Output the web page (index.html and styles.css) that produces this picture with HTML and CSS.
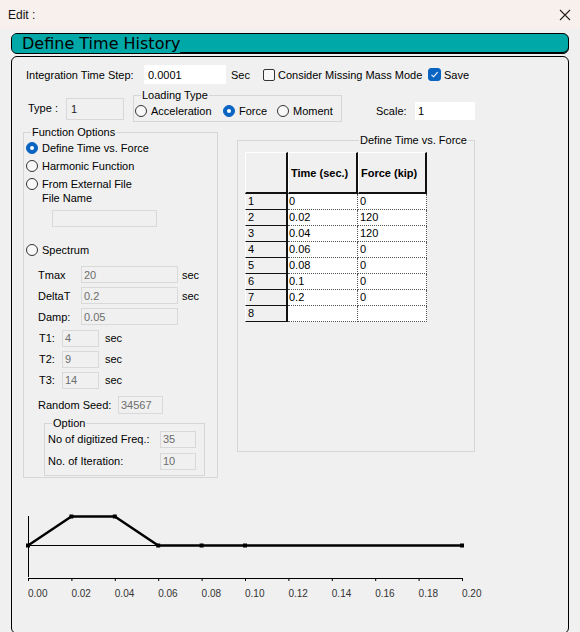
FILE: index.html
```html
<!DOCTYPE html>
<html>
<head>
<meta charset="utf-8">
<link rel="stylesheet" href="styles.css">
</head>
<body>
<div class="titlebar">
  <span class="title">Edit :</span>
  <svg class="close" width="12" height="12" viewBox="0 0 12 12"><path d="M1 1 L11 11 M11 1 L1 11" stroke="#222" stroke-width="1.1" fill="none"/></svg>
</div>
<div class="content">
  <div class="header"><span class="htext">Define Time History</span></div>
  <div class="panel">
    <div class="row1">
      <span class="lbl-step">Integration Time Step:</span>
      <span class="tb w-step">0.0001</span>
      <span class="sec1">Sec</span>
      <span class="check missing"><i class="box"></i><span>Consider Missing Mass Mode</span></span>
      <span class="check save"><i class="box on"><svg width="9" height="9" viewBox="0 0 9 9"><path d="M1.5 4.8 L3.6 6.8 L7.6 2.2" stroke="#fff" stroke-width="1.1" fill="none"/></svg></i><span>Save</span></span>
    </div>
    <div class="row2">
      <div class="type"><span class="lbl-type">Type :</span><span class="tb dis w-type">1</span></div>
      <fieldset class="loading">
        <legend>Loading Type</legend>
        <div class="lt-radios">
          <span class="rb r-acc"><i></i>Acceleration</span>
          <span class="rb r-force"><i class="on"></i>Force</span>
          <span class="rb r-mom"><i></i>Moment</span>
        </div>
      </fieldset>
      <div class="scale"><span class="lbl-scale">Scale:</span><span class="tb w-scale">1</span></div>
    </div>
    <div class="main">
      <fieldset class="fo">
        <legend>Function Options</legend>
        <div class="fo-radios">
          <span class="rb"><i class="on"></i>Define Time vs. Force</span>
          <span class="rb"><i></i>Harmonic Function</span>
          <span class="rb"><i></i>From External File</span>
        </div>
        <div class="filename">File Name</div>
        <span class="tb dis w-file"></span>
        <span class="rb spectrum"><i></i>Spectrum</span>
        <div class="params">
          <div class="prow"><span class="pl">Tmax</span><span class="tb dis w-long">20</span><span class="ps">sec</span></div>
          <div class="prow"><span class="pl">DeltaT</span><span class="tb dis w-long">0.2</span><span class="ps">sec</span></div>
          <div class="prow"><span class="pl">Damp:</span><span class="tb dis w-long">0.05</span></div>
          <div class="prow trow"><span class="pl">T1:</span><span class="tb dis w-t">4</span><span class="ps">sec</span></div>
          <div class="prow trow"><span class="pl">T2:</span><span class="tb dis w-t">9</span><span class="ps">sec</span></div>
          <div class="prow trow"><span class="pl">T3:</span><span class="tb dis w-t">14</span><span class="ps">sec</span></div>
        </div>
        <div class="seed"><span class="pl">Random Seed:</span><span class="tb dis w-seed">34567</span></div>
        <fieldset class="option">
          <legend>Option</legend>
          <div class="orow"><span class="ol">No of digitized Freq.:</span><span class="tb dis w-opt">35</span></div>
          <div class="orow"><span class="ol">No. of Iteration:</span><span class="tb dis w-opt">10</span></div>
        </fieldset>
      </fieldset>
      <fieldset class="tg">
        <legend>Define Time vs. Force</legend>
        <table class="grid">
          <colgroup><col class="c1"><col class="c2"><col class="c3"></colgroup>
          <tr class="hdr"><th></th><th>Time (sec.)</th><th>Force (kip)</th></tr>
          <tr><td class="rh">1</td><td>0</td><td>0</td></tr>
          <tr><td class="rh">2</td><td>0.02</td><td>120</td></tr>
          <tr><td class="rh">3</td><td>0.04</td><td>120</td></tr>
          <tr><td class="rh">4</td><td>0.06</td><td>0</td></tr>
          <tr><td class="rh">5</td><td>0.08</td><td>0</td></tr>
          <tr><td class="rh">6</td><td>0.1</td><td>0</td></tr>
          <tr><td class="rh">7</td><td>0.2</td><td>0</td></tr>
          <tr><td class="rh">8</td><td></td><td></td></tr>
        </table>
      </fieldset>
    </div>
    <svg class="chart" width="556" height="112" viewBox="12 498 556 112">
      <line x1="28.5" y1="515" x2="28.5" y2="576" stroke="#000" stroke-width="1"/>
      <line x1="28" y1="544.5" x2="462" y2="544.5" stroke="#000" stroke-width="1"/>
      <polyline points="28,544.5 71.4,515.5 114.8,515.5 158.2,544.5 201.6,544.5 245,544.5 462,544.5" fill="none" stroke="#000" stroke-width="2.4"/>
      <g fill="#000">
        <rect x="26" y="542.5" width="4" height="4"/>
        <rect x="69.4" y="513.5" width="4" height="4"/>
        <rect x="112.8" y="513.5" width="4" height="4"/>
        <rect x="156.2" y="542.5" width="4" height="4"/>
        <rect x="199.6" y="542.5" width="4" height="4"/>
        <rect x="243" y="542.5" width="4" height="4"/>
        <rect x="460" y="542.5" width="4" height="4"/>
      </g>
      <line x1="28" y1="577.5" x2="462.5" y2="577.5" stroke="#000" stroke-width="1"/>
      <g stroke="#000" stroke-width="1">
        <line x1="28.5" y1="577" x2="28.5" y2="580"/>
        <line x1="71.9" y1="577" x2="71.9" y2="580"/>
        <line x1="115.3" y1="577" x2="115.3" y2="580"/>
        <line x1="158.7" y1="577" x2="158.7" y2="580"/>
        <line x1="202.1" y1="577" x2="202.1" y2="580"/>
        <line x1="245.5" y1="577" x2="245.5" y2="580"/>
        <line x1="288.9" y1="577" x2="288.9" y2="580"/>
        <line x1="332.3" y1="577" x2="332.3" y2="580"/>
        <line x1="375.7" y1="577" x2="375.7" y2="580"/>
        <line x1="419.1" y1="577" x2="419.1" y2="580"/>
        <line x1="462.5" y1="577" x2="462.5" y2="580"/>
      </g>
      <g class="ticklbl" font-size="10" fill="#333">
        <text x="28" y="596">0.00</text>
        <text x="71.4" y="596">0.02</text>
        <text x="114.8" y="596">0.04</text>
        <text x="158.2" y="596">0.06</text>
        <text x="201.6" y="596">0.08</text>
        <text x="245" y="596">0.10</text>
        <text x="288.4" y="596">0.12</text>
        <text x="331.8" y="596">0.14</text>
        <text x="375.2" y="596">0.16</text>
        <text x="418.6" y="596">0.18</text>
        <text x="462" y="596">0.20</text>
      </g>
    </svg>
  </div>
</div>
</body>
</html>
```

FILE: styles.css
```css
* { box-sizing: border-box; }
html, body { margin: 0; padding: 0; }
body {
  width: 580px;
  height: 632px;
  overflow: hidden;
  background: #f0f0f0;
  font-family: "Liberation Sans", Arial, sans-serif;
  font-size: 11px;
  color: #000;
}
.titlebar {
  height: 29px;
  background: #f8f0ed;
  display: flex;
  align-items: center;
  justify-content: space-between;
  padding: 0 9px 0 8px;
}
.title { font-size: 12px; color: #111; }
.close { display: block; }

.content { padding: 4px 11px 0 11px; }
.header {
  height: 21px;
  border: 1px solid #000;
  border-radius: 6px;
  background: #00a8a8;
  box-shadow: inset 0 -1px 0 #000;
  font-family: "DejaVu Sans", "Liberation Sans", sans-serif;
  font-size: 16px;
  line-height: 19px;
  padding: 0;
  color: #000;
}
.htext {
  display: inline-block;
  height: 19px;
  line-height: 20px;
  padding-left: 10px;
  background: #00a8a8;
  border-bottom-left-radius: 5px;
  border-top-left-radius: 5px;
  vertical-align: top;
}
.panel {
  margin-top: 2px;
  height: 578px;
  border: 1px solid #000;
  border-radius: 6px;
  padding-top: 8px;
}

.tb {
  display: flex;
  align-items: center;
  background: #fff;
  padding-left: 3px;
  height: 17px;
  flex: none;
}
.tb.dis {
  background: #f0f0f0;
  border: 1px solid #d9d9d9;
  color: #6d6d6d;
  padding-left: 2px;
}

/* row 1 */
.row1 { display: flex; align-items: center; height: 19px; padding-left: 14px; }
.lbl-step { width: 118px; flex: none; }
.w-step { width: 82px; height: 19px; padding-left: 4px; }
.sec1 { margin-left: 5px; width: 32px; flex: none; }
.check { display: flex; align-items: center; flex: none; }
.check .box {
  width: 12px; height: 12px;
  border: 1px solid #333;
  border-radius: 2px;
  background: #f8f8f8;
  margin-right: 3px;
  display: flex; align-items: center; justify-content: center;
}
.check .box.on { width: 13px; height: 13px; background: #0a64c2; border-color: #0a64c2; border-radius: 3px; }
.check .box svg { display: block; }
.missing { width: 165px; }

/* radios */
.rb { display: flex; align-items: center; height: 18px; flex: none; }
.rb i {
  width: 12px; height: 12px;
  border: 1px solid #333;
  border-radius: 50%;
  background: #f8f8f8;
  margin-right: 4px;
  flex: none;
  display: flex; align-items: center; justify-content: center;
}
.rb i.on { background: #0a64c2; border-color: #0a64c2; }
.rb i.on::after { content: ""; width: 4px; height: 4px; border-radius: 50%; background: #fff; }

/* fieldsets */
fieldset {
  margin: 0;
  padding: 0;
  min-width: 0;
  border: 1px solid #d6d6d6;
}
legend {
  padding: 0 1px;
  margin-left: 7px;
  line-height: 13px;
  font-size: 11px;
}

/* row 2 */
.row2 { display: flex; align-items: flex-start; margin-top: 5px; }
.type { display: flex; align-items: center; margin-top: 9px; padding-left: 16px; }
.lbl-type { width: 38px; flex: none; margin-top: -2px; }
.tb.w-type { width: 58px; height: 22px; color: #222; padding-left: 4px; }
.loading { margin-left: 9px; width: 209px; padding: 0 0 1px 0; }
.lt-radios { display: flex; }
.r-acc { width: 88px; margin-left: 1px; }
.r-force { width: 54px; }
.r-mom { width: 60px; }
.scale { display: flex; align-items: center; margin-top: 13px; margin-left: 34px; }
.lbl-scale { width: 39px; flex: none; }
.w-scale { width: 60px; height: 18px; }

/* main area */
.main { display: flex; align-items: flex-start; margin-top: 4px; padding-left: 11px; }
.fo { width: 195px; height: 352px; }
.fo-radios { margin-top: 0; padding-left: 2px; }
.filename { margin-top: -2px; margin-left: 18px; line-height: 14px; }
.w-file { margin-top: 5px; margin-left: 28px; width: 105px; }
.spectrum { margin-top: 14px; margin-left: 2px; }
.params { margin-top: 7px; display: flex; flex-direction: column; gap: 4.2px; }
.prow { display: flex; align-items: center; height: 17px; padding-left: 14px; }
.prow .pl { width: 43px; flex: none; }
.w-long { width: 97px; }
.ps { margin-left: 4px; }
.trow { padding-left: 15px; }
.trow .pl { width: 23px; }
.w-t { width: 37px; }
.trow .ps { margin-left: 6px; }
.seed { display: flex; align-items: center; margin-top: 7px; padding-left: 14px; height: 18px; }
.seed .pl { width: 80px; flex: none; }
.w-seed { width: 45px; height: 18px; }
.option { margin-top: 3px; margin-left: 20px; width: 161px; height: 59px; padding-top: 1px; }
.orow { display: flex; align-items: center; height: 17px; padding-left: 3px; }
.orow + .orow { margin-top: 5px; }
.ol { width: 112px; flex: none; }
.w-opt { width: 36px; }

.tg { margin-left: 19px; margin-top: 8px; width: 238px; height: 318px; padding: 5px 0 0 7px; }
.tg legend { margin-left: auto; margin-right: 6px; }

.grid { border-collapse: separate; border-spacing: 0; table-layout: fixed; width: 182px; }
.c1 { width: 43px; }
.c2 { width: 70px; }
.c3 { width: 69px; }
.grid tr { height: 16px; }
.grid tr.hdr { height: 42px; }
.grid th {
  height: 42px;
  background: #f0f0f0;
  border-top: 1px solid #fff;
  border-left: 1px solid #fff;
  border-right: 2px solid #111;
  border-bottom: 2px solid #111;
  font-weight: bold;
  text-align: left;
  padding: 0 0 0 2px;
  font-size: 11px;
}
.grid td {
  height: 16px;
  padding: 0 0 0 1px;
  line-height: 13px;
  background: #fff;
  border-bottom: 1px dotted #555;
  border-right: 1px dotted #555;
  white-space: nowrap;
}
.grid td:nth-child(3) { padding-left: 2px; }
.grid td.rh {
  background: #f0f0f0;
  border-left: 1px solid #fff;
  border-bottom: 1px solid #111;
  border-right: 2px solid #111;
  padding-left: 2px;
}

.chart { display: block; margin-top: 21px; margin-left: 0; }
.ticklbl { font-family: "Liberation Sans", Arial, sans-serif; }
```
